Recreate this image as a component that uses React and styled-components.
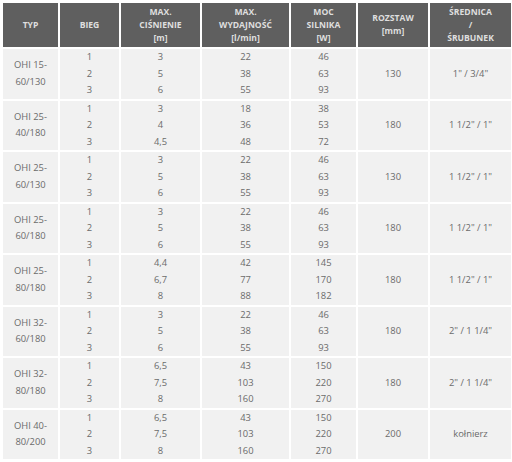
import React from "react";
import styled, { createGlobalStyle } from "styled-components";

const GlobalStyle = createGlobalStyle`
  html, body {
    margin: 0;
    padding: 0;
    background: #ffffff;
  }
  body {
    font-family: "Open Sans", "Liberation Sans", sans-serif;
  }
`;

const COLUMNS = [
  { width: 55, label: ["TYP"] },
  { width: 59, label: ["BIEG"] },
  { width: 79, label: ["MAX.", "CIŚNIENIE", "[m]"] },
  { width: 87, label: ["MAX.", "WYDAJNOŚĆ", "[l/min]"] },
  { width: 65, label: ["MOC", "SILNIKA", "[W]"] },
  { width: 70, label: ["ROZSTAW", "[mm]"] },
  { width: 81, label: ["ŚREDNICA", "/", "ŚRUBUNEK"] },
];

const pumps = [
  { type: ["OHI 15-", "60/130"], pressure: ["3", "5", "6"], flow: ["22", "38", "55"], power: ["46", "63", "93"], spacing: "130", size: "1\" / 3/4\"" },
  { type: ["OHI 25-", "40/180"], pressure: ["3", "4", "4,5"], flow: ["18", "36", "48"], power: ["38", "53", "72"], spacing: "180", size: "1 1/2\" / 1\"" },
  { type: ["OHI 25-", "60/130"], pressure: ["3", "5", "6"], flow: ["22", "38", "55"], power: ["46", "63", "93"], spacing: "130", size: "1 1/2\" / 1\"" },
  { type: ["OHI 25-", "60/180"], pressure: ["3", "5", "6"], flow: ["22", "38", "55"], power: ["46", "63", "93"], spacing: "180", size: "1 1/2\" / 1\"" },
  { type: ["OHI 25-", "80/180"], pressure: ["4,4", "6,7", "8"], flow: ["42", "77", "88"], power: ["145", "170", "182"], spacing: "180", size: "1 1/2\" / 1\"" },
  { type: ["OHI 32-", "60/180"], pressure: ["3", "5", "6"], flow: ["22", "38", "55"], power: ["46", "63", "93"], spacing: "180", size: "2\" / 1 1/4\"" },
  { type: ["OHI 32-", "80/180"], pressure: ["6,5", "7,5", "8"], flow: ["43", "103", "160"], power: ["150", "220", "270"], spacing: "180", size: "2\" / 1 1/4\"" },
  { type: ["OHI 40-", "80/200"], pressure: ["6,5", "7,5", "8"], flow: ["43", "103", "160"], power: ["150", "220", "270"], spacing: "200", size: "kołnierz" },
];

const Wrapper = styled.div`
  padding: 1px 0 0 1px;
`;

const Table = styled.table`
  border-collapse: separate;
  border-spacing: 2px;
  table-layout: fixed;
  width: 512px;
`;

const HeadCell = styled.th`
  background: #5f5f5f;
  color: #dedede;
  font-size: 8.6px;
  font-weight: 700;
  line-height: 13px;
  text-align: center;
  vertical-align: middle;
  height: 44px;
  padding: 0 2px;
`;

const Cell = styled.td`
  background: #f1f1f1;
  color: #6b6b6b;
  font-size: 9.4px;
  line-height: 16.5px;
  text-align: center;
  vertical-align: middle;
  height: 49.4px;
  padding: 0 2px;
`;

const Lines = ({ items }) =>
  items.map((line, i) => (
    <React.Fragment key={i}>
      {i > 0 && <br />}
      {line}
    </React.Fragment>
  ));

export default function App() {
  return (
    <>
      <GlobalStyle />
      <Wrapper>
        <Table>
          <colgroup>
            {COLUMNS.map((col, i) => (
              <col key={i} style={{ width: col.width }} />
            ))}
          </colgroup>
          <thead>
            <tr>
              {COLUMNS.map((col, i) => (
                <HeadCell key={i}>
                  <Lines items={col.label} />
                </HeadCell>
              ))}
            </tr>
          </thead>
          <tbody>
            {pumps.map((p, i) => (
              <tr key={i}>
                <Cell>
                  <Lines items={p.type} />
                </Cell>
                <Cell>
                  <Lines items={["1", "2", "3"]} />
                </Cell>
                <Cell>
                  <Lines items={p.pressure} />
                </Cell>
                <Cell>
                  <Lines items={p.flow} />
                </Cell>
                <Cell>
                  <Lines items={p.power} />
                </Cell>
                <Cell>{p.spacing}</Cell>
                <Cell>{p.size}</Cell>
              </tr>
            ))}
          </tbody>
        </Table>
      </Wrapper>
    </>
  );
}
